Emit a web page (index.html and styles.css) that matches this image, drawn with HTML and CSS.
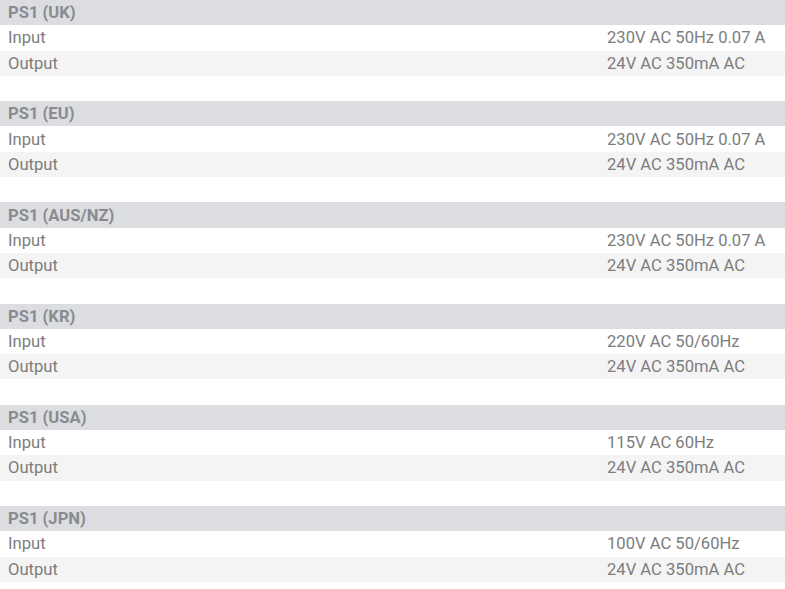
FILE: index.html
```html
<!DOCTYPE html>
<html>
<head>
<meta charset="utf-8">
<link rel="stylesheet" href="styles.css">
</head>
<body>
<div class="specs">
  <div class="group">
    <div class="row head"><span class="cell">PS1 (UK)</span></div>
    <div class="row"><span class="cell">Input</span><span class="cell">230V AC 50Hz 0.07 A</span></div>
    <div class="row alt"><span class="cell">Output</span><span class="cell">24V AC 350mA AC</span></div>
  </div>
  <div class="group">
    <div class="row head"><span class="cell">PS1 (EU)</span></div>
    <div class="row"><span class="cell">Input</span><span class="cell">230V AC 50Hz 0.07 A</span></div>
    <div class="row alt"><span class="cell">Output</span><span class="cell">24V AC 350mA AC</span></div>
  </div>
  <div class="group">
    <div class="row head"><span class="cell">PS1 (AUS/NZ)</span></div>
    <div class="row"><span class="cell">Input</span><span class="cell">230V AC 50Hz 0.07 A</span></div>
    <div class="row alt"><span class="cell">Output</span><span class="cell">24V AC 350mA AC</span></div>
  </div>
  <div class="group">
    <div class="row head"><span class="cell">PS1 (KR)</span></div>
    <div class="row"><span class="cell">Input</span><span class="cell">220V AC 50/60Hz</span></div>
    <div class="row alt"><span class="cell">Output</span><span class="cell">24V AC 350mA AC</span></div>
  </div>
  <div class="group">
    <div class="row head"><span class="cell">PS1 (USA)</span></div>
    <div class="row"><span class="cell">Input</span><span class="cell">115V AC 60Hz</span></div>
    <div class="row alt"><span class="cell">Output</span><span class="cell">24V AC 350mA AC</span></div>
  </div>
  <div class="group">
    <div class="row head"><span class="cell">PS1 (JPN)</span></div>
    <div class="row"><span class="cell">Input</span><span class="cell">100V AC 50/60Hz</span></div>
    <div class="row alt"><span class="cell">Output</span><span class="cell">24V AC 350mA AC</span></div>
  </div>
</div>
</body>
</html>
```
FILE: styles.css
```css
html, body {
  margin: 0;
  padding: 0;
  background: #ffffff;
}
body {
  font-family: Roboto, "Liberation Sans", sans-serif;
  font-size: 16.6px;
  color: #7d7d7d;
}
.specs {
  display: flex;
  flex-direction: column;
}
.group {
  display: flex;
  flex-direction: column;
  margin-bottom: 25.3px;
}
.row {
  display: grid;
  grid-template-columns: 599px 1fr;
  height: 25.3px;
  align-items: center;
}
.cell {
  padding-left: 8px;
  white-space: nowrap;
}
.head {
  background: #dcdde0;
  font-weight: bold;
  color: #888b8f;
}
.alt {
  background: #f4f4f4;
}
```
